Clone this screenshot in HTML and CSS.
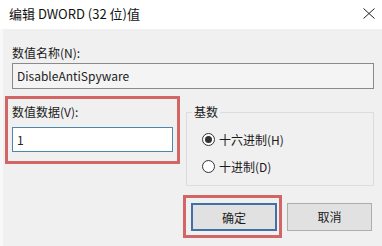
FILE: index.html
```html
<!DOCTYPE html>
<html lang="zh-CN">
<head>
<meta charset="utf-8">
<title>编辑 DWORD (32 位)值</title>
<link rel="stylesheet" href="styles.css">
</head>
<body>
<div class="dialog">
  <div class="titlebar">
    <span class="title">编辑 DWORD (32 位)值</span>
    <svg class="close" width="12" height="11" viewBox="0 0 12 11"><path d="M0.5 0.5 L11.5 10.5 M11.5 0.5 L0.5 10.5" stroke="#222" stroke-width="1" fill="none"/></svg>
  </div>
  <div class="content">
    <div class="label name-label">数值名称(N):</div>
    <div class="field readonly">DisableAntiSpyware</div>
    <div class="row">
      <div class="datacol">
        <div class="label">数值数据(V):</div>
        <div class="field focused">1</div>
      </div>
      <fieldset class="group">
        <legend>基数</legend>
        <div class="radio-row first"><span class="radio checked"></span><span>十六进制(H)</span></div>
        <div class="radio-row"><span class="radio"></span><span>十进制(D)</span></div>
      </fieldset>
    </div>
    <div class="buttons">
      <div class="hl-btn"><div class="btn default">确定</div></div>
      <div class="btn">取消</div>
    </div>
  </div>
</div>
</body>
</html>
```
FILE: styles.css
```css
html, body {
  margin: 0;
  padding: 0;
}
body {
  width: 382px;
  height: 246px;
  overflow: hidden;
  font-family: "Noto Sans CJK SC", "Noto Sans", sans-serif;
  font-size: 12px;
  color: #1a1a1a;
  background: #f0f0f0;
}
.dialog {
  display: flex;
  flex-direction: column;
  height: 246px;
}
.titlebar {
  height: 29px;
  background: #ffffff;
  display: flex;
  align-items: center;
  justify-content: space-between;
  padding: 0 7px 0 9px;
  box-sizing: border-box;
}
.title {
  font-size: 13px;
  line-height: 16px;
  color: #111;
  margin-top: -1px;
}
.close {
  display: block;
  margin-top: -3px;
}
.content {
  flex: 1;
  background: #f0f0f0;
  border-left: 3px solid #f8f8f8;
  padding: 0 8px 0 2px;
}
.label {
  line-height: 16px;
  color: #1a1a1a;
}
.name-label {
  margin: 16px 0 0 7px;
}
.field {
  height: 26px;
  box-sizing: border-box;
  border: 1px solid #8a8a8a;
  line-height: 24px;
  padding-left: 4px;
  color: #222;
}
.readonly {
  background: #f4f4f4;
  margin: 2px 0 0 7px;
}
.row {
  display: flex;
  gap: 6px;
  margin-top: 7px;
  align-items: flex-start;
}
.datacol {
  width: 175px;
  box-sizing: border-box;
  border: 3px solid #d26566;
  padding: 5px 4px 9px 4px;
}
.focused {
  margin-top: 7px;
  height: 25px;
  line-height: 23px;
  background: #ffffff;
  border-color: #4e87ab;
}
.group {
  flex: 1;
  margin: 9px 0 0 0;
  padding: 0 0 9px 0;
  border: 1px solid #dcdcdc;
  min-width: 0;
}
.group legend {
  margin-left: 5px;
  padding: 0 2px;
  line-height: 14px;
}
.radio-row {
  display: flex;
  align-items: center;
  height: 20px;
  margin-top: 7px;
  padding-left: 15px;
  gap: 4px;
}
.radio-row.first {
  margin-top: 10px;
}
.radio {
  width: 13px;
  height: 13px;
  box-sizing: border-box;
  border: 1px solid #333;
  border-radius: 50%;
  background: #fff;
  display: flex;
  align-items: center;
  justify-content: center;
}
.radio.checked::after {
  content: "";
  width: 7px;
  height: 7px;
  border-radius: 50%;
  background: #333;
}
.buttons {
  display: flex;
  justify-content: flex-end;
  align-items: center;
  gap: 5px;
  margin-top: 9px;
  padding-right: 2px;
}
.hl-btn {
  border: 3px solid #d26566;
  padding: 5px 2px 4px 5px;
}
.btn {
  width: 85px;
  height: 28px;
  box-sizing: border-box;
  border: 1px solid #adadad;
  background: #e1e1e1;
  display: flex;
  align-items: center;
  justify-content: center;
  color: #1a1a1a;
}
.btn.default {
  width: 86px;
  border: 2px solid #3f71a6;
}
```
